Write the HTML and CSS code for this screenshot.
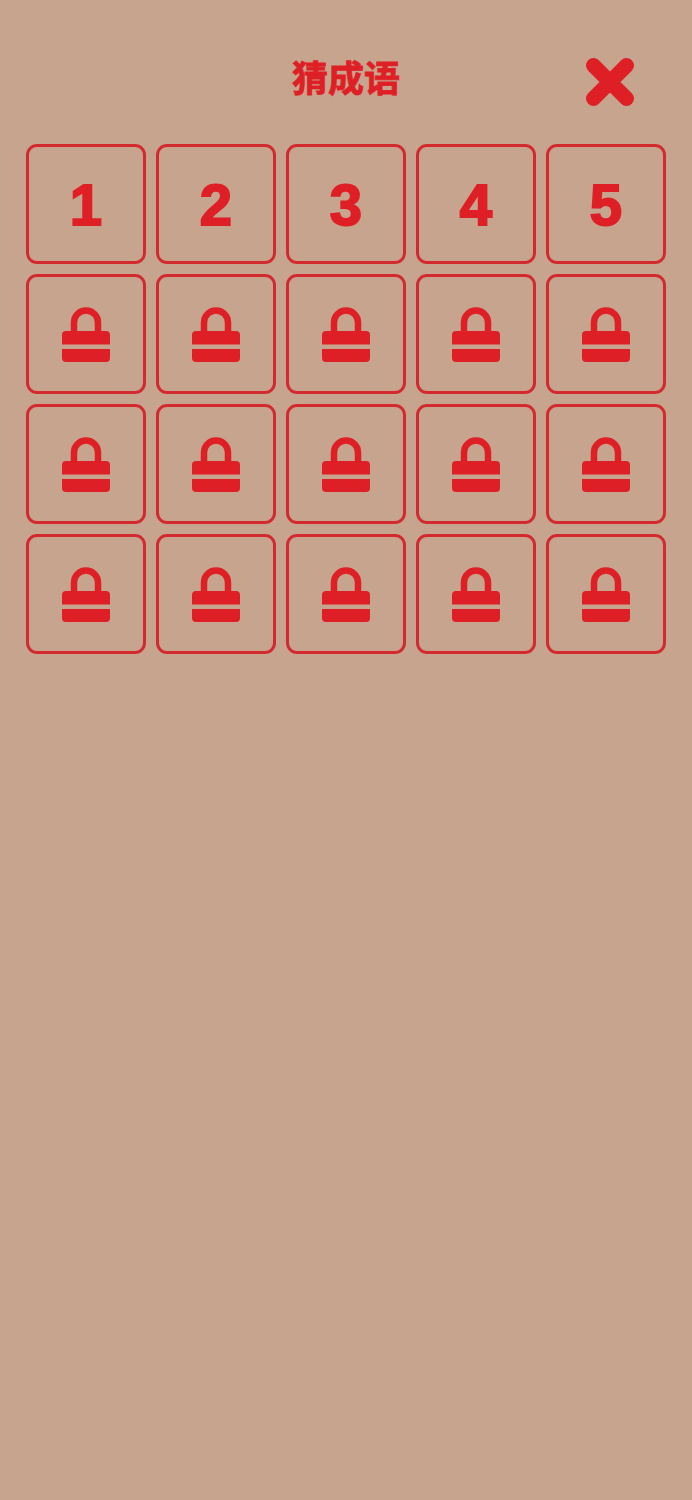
FILE: index.html
```html
<!DOCTYPE html>
<html lang="zh">
<head>
  <meta charset="UTF-8" />
  <title>猜成语</title>
  <link rel="stylesheet" href="styles.css">
</head>
<body>
  <svg class="defs" width="0" height="0">
    <symbol id="lock" viewBox="0 0 48 55">
      <path class="shackle" d="M12 26V15.500a12 12 0 0 1 24 0V26" />
      <path d="M4 24h40a4 4 0 0 1 4 4v9.500H0V28a4 4 0 0 1 4-4z" />
      <path d="M0 42h48v9a4 4 0 0 1-4 4H4a4 4 0 0 1-4-4z" />
    </symbol>
  </svg>

  <div class="header">
    <h1 class="title">猜成语</h1>
    <button class="close" aria-label="关闭">
      <svg width="48" height="48" viewBox="0 0 48 48">
        <path d="M7.500 7.500L40.500 40.500M40.500 7.500L7.500 40.500" />
      </svg>
    </button>
  </div>

  <div class="grid">
    <div class="tile"><span class="num">1</span></div>
    <div class="tile"><span class="num">2</span></div>
    <div class="tile"><span class="num">3</span></div>
    <div class="tile"><span class="num">4</span></div>
    <div class="tile"><span class="num">5</span></div>

    <div class="tile"><svg class="lock"><use href="#lock" /></svg></div>
    <div class="tile"><svg class="lock"><use href="#lock" /></svg></div>
    <div class="tile"><svg class="lock"><use href="#lock" /></svg></div>
    <div class="tile"><svg class="lock"><use href="#lock" /></svg></div>
    <div class="tile"><svg class="lock"><use href="#lock" /></svg></div>

    <div class="tile"><svg class="lock"><use href="#lock" /></svg></div>
    <div class="tile"><svg class="lock"><use href="#lock" /></svg></div>
    <div class="tile"><svg class="lock"><use href="#lock" /></svg></div>
    <div class="tile"><svg class="lock"><use href="#lock" /></svg></div>
    <div class="tile"><svg class="lock"><use href="#lock" /></svg></div>

    <div class="tile"><svg class="lock"><use href="#lock" /></svg></div>
    <div class="tile"><svg class="lock"><use href="#lock" /></svg></div>
    <div class="tile"><svg class="lock"><use href="#lock" /></svg></div>
    <div class="tile"><svg class="lock"><use href="#lock" /></svg></div>
    <div class="tile"><svg class="lock"><use href="#lock" /></svg></div>
  </div>
</body>
</html>
```

FILE: styles.css
```css
html, body {
  margin: 0;
  height: 100%;
}
body {
  background: #c7a48d;
  color: #df1f26;
  font-family: "Liberation Sans", "Noto Sans CJK SC", sans-serif;
  padding-top: 58px;
  box-sizing: border-box;
  overflow: hidden;
}
.defs {
  position: absolute;
}
.header {
  display: grid;
  grid-template-columns: 1fr auto 1fr;
  align-items: start;
  height: 86px;
}
.title {
  grid-column: 2;
  margin: 0;
  font-family: "Noto Sans CJK SC", sans-serif;
  font-size: 36px;
  font-weight: 700;
  line-height: 36px;
  -webkit-text-stroke: 0.800px #df1f26;
}
.close {
  grid-column: 3;
  justify-self: end;
  margin-right: 58px;
  padding: 0;
  border: none;
  background: none;
  width: 48px;
  height: 48px;
}
.close svg {
  display: block;
}
.close path {
  fill: none;
  stroke: #df1f26;
  stroke-width: 15;
  stroke-linecap: round;
}
.grid {
  display: grid;
  grid-template-columns: repeat(5, 120px);
  grid-auto-rows: 120px;
  gap: 10px;
  padding-left: 26px;
}
.tile {
  display: flex;
  align-items: center;
  justify-content: center;
  box-sizing: border-box;
  border: 3px solid #d32a30;
  border-radius: 11px;
}
.num {
  font-family: "Liberation Sans", sans-serif;
  font-size: 58px;
  font-weight: 700;
  line-height: 1;
  padding-top: 2px;
  -webkit-text-stroke: 2px #df1f26;
}
.lock {
  width: 48px;
  height: 55px;
  fill: #df1f26;
}
.shackle {
  fill: none;
  stroke: #df1f26;
  stroke-width: 6.500;
}
```
